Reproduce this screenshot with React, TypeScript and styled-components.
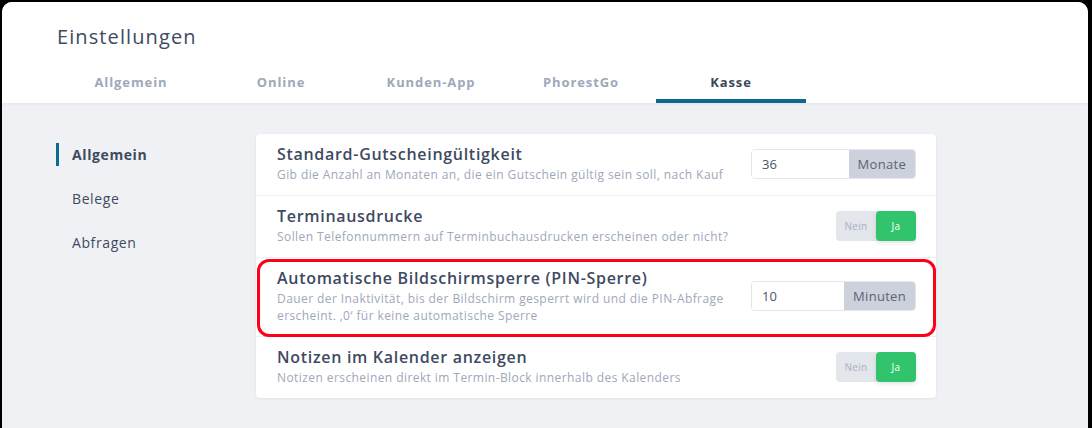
import React, { useState } from "react";
import styled, { createGlobalStyle } from "styled-components";

const FONT = `"Open Sans", "Noto Sans", sans-serif`;

const GlobalStyle = createGlobalStyle`
    html, body {
        margin: 0;
        padding: 0;
        background: #000;
        font-family: ${FONT};
    }
    * {
        box-sizing: border-box;
    }
`;

const Window = styled.div`
    margin: 2px 4px 0 2px;
    height: 426px;
    border-radius: 10px 10px 0 0;
    overflow: hidden;
    background: #f0f1f5;
    display: flex;
    flex-direction: column;
`;

const Header = styled.header`
    background: #fff;
    padding: 22px 0 0 54px;
    height: 101px;
    display: flex;
    flex-direction: column;
    justify-content: space-between;
    box-shadow: 0 1px 3px rgba(30, 40, 60, 0.06);
    position: relative;
    z-index: 1;
`;

const Title = styled.h1`
    margin: 0 0 0 1px;
    font-size: 20px;
    line-height: 26px;
    font-weight: 500;
    letter-spacing: 1.1px;
    color: #3e4a5f;
`;

const Tabs = styled.nav`
    display: flex;
`;

const Tab = styled.div<{ $active?: boolean }>`
    width: 150px;
    height: 37px;
    padding-bottom: 1px;
    display: flex;
    align-items: center;
    justify-content: center;
    font-size: 13px;
    font-weight: 700;
    letter-spacing: 0.9px;
    color: ${(p) => (p.$active ? "#3d4859" : "#9ea8ba")};
    border-bottom: 4px solid ${(p) => (p.$active ? "#0e6a8c" : "transparent")};
`;

const Body = styled.main`
    display: flex;
    padding: 31px 0 0 54px;
`;

const Sidebar = styled.aside`
    width: 200px;
    margin-top: -2px;
    display: flex;
    flex-direction: column;
`;

const SideItem = styled.div<{ $active?: boolean }>`
    height: 44px;
    display: flex;
    align-items: center;
    padding-left: 16px;
    font-size: 14px;
    font-weight: ${(p) => (p.$active ? 700 : 400)};
    letter-spacing: 0.6px;
    color: #3e4a5f;
    position: relative;

    &::before {
        content: "";
        display: ${(p) => (p.$active ? "block" : "none")};
        position: absolute;
        left: 0;
        top: 11px;
        width: 3px;
        height: 23px;
        background: #0e6a8c;
    }
`;

const Card = styled.section`
    width: 680px;
    background: #fff;
    border-radius: 4px;
    box-shadow: 0 1px 3px rgba(30, 40, 60, 0.08);
    display: flex;
    flex-direction: column;
`;

const Row = styled.div<{ $highlight?: boolean }>`
    display: flex;
    align-items: center;
    gap: 20px;
    padding: 10px 20px 12px 21px;
    border-bottom: 1px solid #eceef2;
    position: relative;

    &:last-child {
        border-bottom: none;
    }

    &::after {
        content: "";
        display: ${(p) => (p.$highlight ? "block" : "none")};
        position: absolute;
        top: 1px;
        left: 1px;
        right: 0;
        bottom: -1px;
        border: 3px solid #ff0018;
        border-radius: 12px;
        pointer-events: none;
    }
`;

const RowText = styled.div`
    flex: 1;
    display: flex;
    flex-direction: column;
    gap: 2px;
`;

const RowTitle = styled.div`
    font-size: 16px;
    line-height: 20px;
    font-weight: 600;
    letter-spacing: 0.7px;
    color: #3e4a5f;
`;

const RowDesc = styled.div`
    font-size: 12px;
    line-height: 17px;
    letter-spacing: 0.42px;
    color: #9ea8ba;
`;

const InputGroup = styled.div`
    flex-shrink: 0;
    width: 165px;
    height: 30px;
    display: flex;
    border: 1px solid #e3e6eb;
    border-radius: 4px;
    overflow: hidden;
`;

const NumberInput = styled.input`
    flex: 1;
    min-width: 0;
    border: none;
    outline: none;
    padding: 0 10px;
    font-family: ${FONT};
    font-size: 13px;
    color: #4a5568;
`;

const Addon = styled.span`
    display: flex;
    align-items: center;
    padding: 0 9px;
    background: #cdd1dc;
    font-size: 13px;
    letter-spacing: 0.3px;
    color: #5b6475;
`;

const Toggle = styled.div`
    flex-shrink: 0;
    display: flex;
    width: 80px;
    height: 30px;
    border-radius: 4px;
    background: #e3e6eb;
`;

const ToggleOption = styled.button<{ $on?: boolean }>`
    width: 40px;
    border: none;
    padding: 0;
    border-radius: 4px;
    font-family: ${FONT};
    font-size: 10px;
    letter-spacing: 0.3px;
    background: ${(p) => (p.$on ? "#31c46d" : "transparent")};
    color: ${(p) => (p.$on ? "#fff" : "#a9b1c0")};
    box-shadow: ${(p) => (p.$on ? "0 2px 4px rgba(30, 40, 60, 0.12)" : "none")};
    cursor: pointer;
`;

type Setting =
    | { title: string; desc: string; kind: "input"; value: string; unit: string; highlight?: boolean }
    | { title: string; desc: string; kind: "toggle"; value: boolean; highlight?: boolean };

const settings: Setting[] = [
    {
        title: "Standard-Gutscheingültigkeit",
        desc: "Gib die Anzahl an Monaten an, die ein Gutschein gültig sein soll, nach Kauf",
        kind: "input",
        value: "36",
        unit: "Monate",
    },
    {
        title: "Terminausdrucke",
        desc: "Sollen Telefonnummern auf Terminbuchausdrucken erscheinen oder nicht?",
        kind: "toggle",
        value: true,
    },
    {
        title: "Automatische Bildschirmsperre (PIN-Sperre)",
        desc: "Dauer der Inaktivität, bis der Bildschirm gesperrt wird und die PIN-Abfrage erscheint. ‚0‘ für keine automatische Sperre",
        kind: "input",
        value: "10",
        unit: "Minuten",
        highlight: true,
    },
    {
        title: "Notizen im Kalender anzeigen",
        desc: "Notizen erscheinen direkt im Termin-Block innerhalb des Kalenders",
        kind: "toggle",
        value: true,
    },
];

const YesNo: React.FC<{ initial: boolean }> = ({ initial }) => {
    const [on, setOn] = useState(initial);
    return (
        <Toggle>
            <ToggleOption $on={!on} onClick={() => setOn(false)}>Nein</ToggleOption>
            <ToggleOption $on={on} onClick={() => setOn(true)}>Ja</ToggleOption>
        </Toggle>
    );
};

const tabs = ["Allgemein", "Online", "Kunden-App", "PhorestGo", "Kasse"];
const sections = ["Allgemein", "Belege", "Abfragen"];

const App: React.FC = () => {
    return (
        <>
            <GlobalStyle />
            <Window>
                <Header>
                    <Title>Einstellungen</Title>
                    <Tabs>
                        {tabs.map((t) => (
                            <Tab key={t} $active={t === "Kasse"}>{t}</Tab>
                        ))}
                    </Tabs>
                </Header>
                <Body>
                    <Sidebar>
                        {sections.map((s, i) => (
                            <SideItem key={s} $active={i === 0}>{s}</SideItem>
                        ))}
                    </Sidebar>
                    <Card>
                        {settings.map((s) => (
                            <Row key={s.title} $highlight={s.highlight}>
                                <RowText>
                                    <RowTitle>{s.title}</RowTitle>
                                    <RowDesc>{s.desc}</RowDesc>
                                </RowText>
                                {s.kind === "input" ? (
                                    <InputGroup>
                                        <NumberInput defaultValue={s.value} />
                                        <Addon>{s.unit}</Addon>
                                    </InputGroup>
                                ) : (
                                    <YesNo initial={s.value} />
                                )}
                            </Row>
                        ))}
                    </Card>
                </Body>
            </Window>
        </>
    );
};

export default App;
